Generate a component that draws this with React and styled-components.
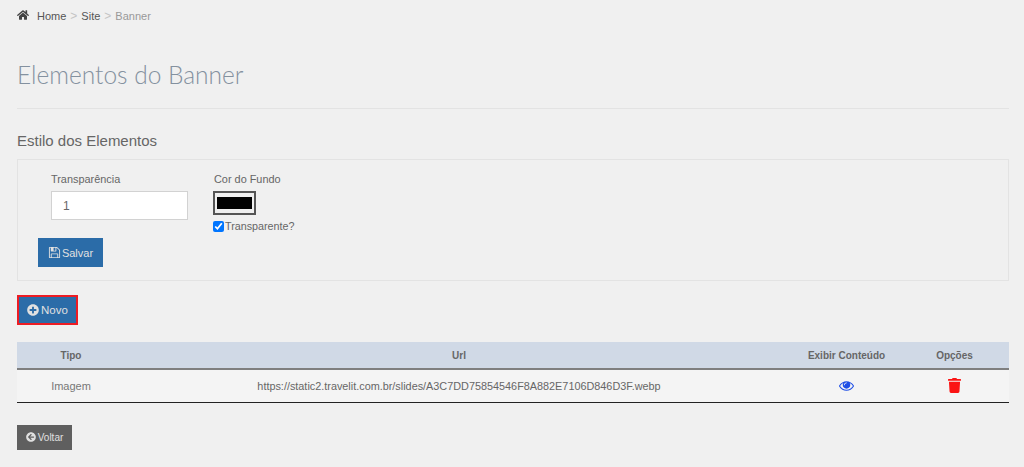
import React from 'react';
import styled, {createGlobalStyle} from 'styled-components';
import {FaHome, FaPlusCircle, FaArrowCircleLeft, FaTrash} from 'react-icons/fa';

const GlobalStyle = createGlobalStyle`
    html,body{
        margin:0;
        background:#f0f0f0;
    }
    body{
        font-family:'Liberation Sans',Arial,sans-serif;
        font-size:12px;
        color:#676a6c;
    }
    *{box-sizing:border-box;}
`;

const Page = styled.div`
    width:1024px;
    height:467px;
    padding:0 15px 0 17px;
    overflow:hidden;
`;

const Breadcrumb = styled.nav`
    display:flex;
    align-items:center;
    height:31px;
    font-size:11px;
    svg{
        width:12px;
        height:12px;
        margin-right:8px;
        color:#444;
        position:relative;
        top:-1px;
    }
`;

const Crumb = styled.span`
    color:${p=>p.active ? '#999' : '#555'};
`;

const Sep = styled.span`
    color:#c4c4c4;
    padding:0 4px;
    font-size:12px;
`;

const Title = styled.h1`
    margin:0;
    padding:29px 0 18px;
    font-family:Lato,sans-serif;
    font-weight:300;
    font-size:24.5px;
    line-height:30px;
    color:#84919f;
    border-bottom:1px solid #e3e3e3;
`;

const SubTitle = styled.h2`
    margin:0;
    padding:23px 0 9px;
    font-size:15px;
    line-height:18px;
    font-weight:normal;
    color:#666;
`;

const Well = styled.section`
    height:122px;
    border:1px solid #e3e3e3;
    padding:12px 20px 0;
`;

const FormRow = styled.div`
    display:flex;
    gap:26px;
    padding-left:13px;
`;

const Field = styled.div`
    display:flex;
    flex-direction:column;
`;

const Label = styled.label`
    font-size:10.9px;
    line-height:14px;
    color:#666;
    margin-bottom:5px;
`;

const TextInput = styled.input`
    width:137px;
    height:29px;
    border:1px solid #d2d2d2;
    background:#fff;
    padding:0 11px;
    font:12px 'Liberation Sans',sans-serif;
    color:#666;
`;

const ColorSwatch = styled.div`
    width:43px;
    height:24px;
    margin-left:-1px;
    border:2px solid #555;
    padding:4px 2px;
    background:#efefef;
    >div{
        width:100%;
        height:100%;
        background:#000;
    }
`;

const CheckRow = styled.label`
    display:flex;
    align-items:center;
    margin:4px 0 0 -1px;
    font-size:10.75px;
    line-height:14px;
    color:#666;
    input{
        width:11px;
        height:11px;
        margin:0 1px 0 0;
        accent-color:#0075ff;
    }
`;

const Button = styled.button`
    display:inline-flex;
    align-items:center;
    justify-content:center;
    gap:${p=>p.gap ?? 2}px;
    border:none;
    padding:0;
    color:#e0e0e0;
    font:${p=>p.size || 11}px 'Liberation Sans',sans-serif;
    background:${p=>p.grey ? '#5f5f5f' : '#2b6ca8'};
    width:${p=>p.w}px;
    height:${p=>p.h}px;
    svg{
        width:${p=>p.icon || 12}px;
        height:${p=>p.icon || 12}px;
    }
`;

const SaveRow = styled.div`
    margin:5px 0 0;
`;

const NewWrap = styled.div`
    margin:14px 0 0;
    display:inline-block;
    border:2px solid #ed1c24;
    line-height:0;
`;

const Table = styled.table`
    width:992px;
    margin-top:17px;
    border-collapse:collapse;
    table-layout:fixed;
`;

const Th = styled.th`
    height:27px;
    background:#d0d9e6;
    border-bottom:2px solid #7f7f7f;
    font-size:10px;
    font-weight:bold;
    text-align:center;
    color:#666;
    padding:0;
`;

const Td = styled.td`
    height:33px;
    background:#f4f4f4;
    border-bottom:1px solid #222;
    text-align:center;
    padding:0;
    font-size:${p=>p.url ? 10.85 : 11}px;
    color:${p=>p.muted ? '#777' : '#666'};
`;

const EyeSvg = styled.svg`
    color:#1f4fe6;
    width:15px;
    height:15px;
    vertical-align:middle;
`;

const Trash = styled(FaTrash)`
    color:#fb1414;
    width:13px;
    height:15px;
    vertical-align:middle;
`;

const BackRow = styled.div`
    margin-top:22px;
    line-height:0;
`;

// font awesome 4 glyphs, the react-icons fa set only has the v5 shapes
const Eye = () => (
    <EyeSvg viewBox="0 0 1792 1792" fill="currentColor">
        <path d="M1664 960q-152-236-381-353 61 104 61 225 0 185-131.500 316.500t-316.500 131.500-316.500-131.500-131.500-316.500q0-121 61-225-229 117-381 353 133 205 333.500 326.500t434.500 121.500 434.500-121.500 333.500-326.500zm-720-384q0-20-14-34t-34-14q-125 0-214.500 89.500t-89.500 214.500q0 20 14 34t34 14 34-14 14-34q0-86 61-147t147-61q20 0 34-14t14-34zm848 384q0 34-20 69-140 230-376.500 368.500t-499.500 138.500-499.500-139-376.500-368q-20-35-20-69t20-69q140-229 376.500-368t499.500-139 499.500 139 376.500 368q20 35 20 69z"/>
    </EyeSvg>
);

const Floppy = () => (
    <svg viewBox="0 0 1792 1792" fill="currentColor">
        <path d="M512 1536h768v-384h-768v384zm896 0h128v-896q0-14-10-38.500t-20-34.500l-281-281q-10-10-34-20t-39-10v416q0 40-28 68t-68 28h-576q-40 0-68-28t-28-68v-416h-128v1280h128v-416q0-40 28-68t68-28h832q40 0 68 28t28 68v416zm-384-928v-320q0-13-9.500-22.500t-22.500-9.500h-192q-13 0-22.500 9.500t-9.500 22.500v320q0 13 9.500 22.500t22.500 9.500h192q13 0 22.500-9.500t9.500-22.500zm640 32v928q0 40-28 68t-68 28h-1344q-40 0-68-28t-28-68v-1344q0-40 28-68t68-28h928q40 0 88 20t76 48l280 280q28 28 48 76t20 88z"/>
    </svg>
);

export default function App(){
    return (
        <Page>
            <GlobalStyle/>
            <Breadcrumb>
                <FaHome/>
                <Crumb>Home</Crumb><Sep>&gt;</Sep>
                <Crumb>Site</Crumb><Sep>&gt;</Sep>
                <Crumb active>Banner</Crumb>
            </Breadcrumb>
            <Title>Elementos do Banner</Title>
            <SubTitle>Estilo dos Elementos</SubTitle>
            <Well>
                <FormRow>
                    <Field>
                        <Label>Transparência</Label>
                        <TextInput defaultValue="1"/>
                    </Field>
                    <Field>
                        <Label>Cor do Fundo</Label>
                        <ColorSwatch><div/></ColorSwatch>
                        <CheckRow><input type="checkbox" defaultChecked/>Transparente?</CheckRow>
                    </Field>
                </FormRow>
                <SaveRow>
                    <Button w={65} h={29} icon={13} gap={1}><Floppy/>Salvar</Button>
                </SaveRow>
            </Well>
            <NewWrap>
                <Button w={57} h={26} size={11.5}><FaPlusCircle/>Novo</Button>
            </NewWrap>
            <Table>
                <colgroup>
                    <col width="108"/>
                    <col width="668"/>
                    <col width="107"/>
                    <col width="109"/>
                </colgroup>
                <thead>
                    <tr>
                        <Th>Tipo</Th>
                        <Th>Url</Th>
                        <Th>Exibir Conteúdo</Th>
                        <Th>Opções</Th>
                    </tr>
                </thead>
                <tbody>
                    <tr>
                        <Td muted>Imagem</Td>
                        <Td url>https://static2.travelit.com.br/slides/A3C7DD75854546F8A882E7106D846D3F.webp</Td>
                        <Td><Eye/></Td>
                        <Td><Trash/></Td>
                    </tr>
                </tbody>
            </Table>
            <BackRow>
                <Button grey w={55} h={25} size={10} icon={10}><FaArrowCircleLeft/>Voltar</Button>
            </BackRow>
        </Page>
    )
}
